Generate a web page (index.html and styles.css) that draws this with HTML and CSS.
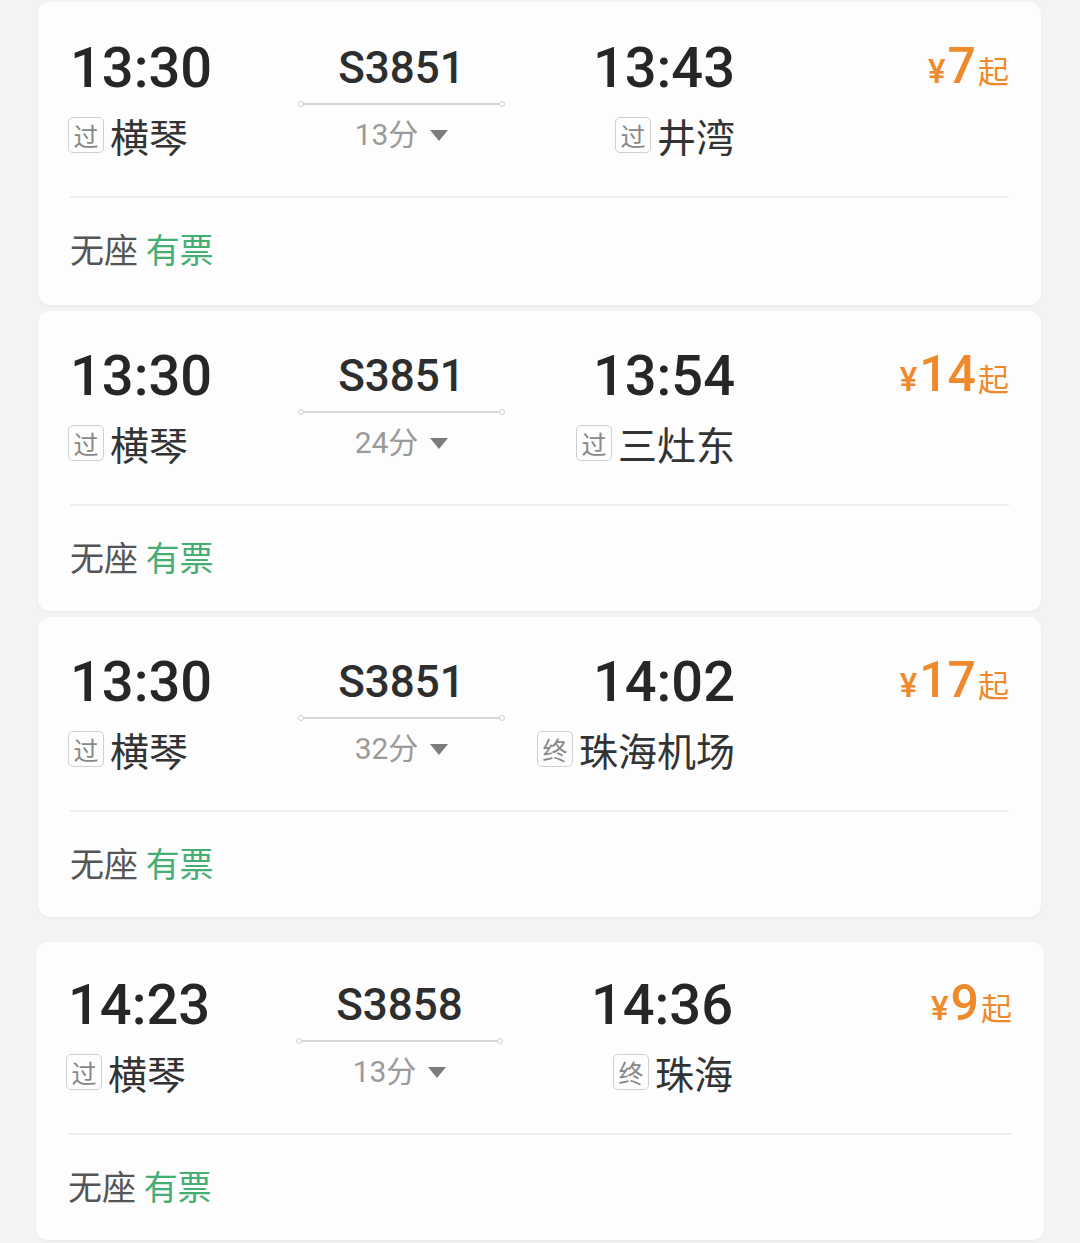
FILE: index.html
```html
<!DOCTYPE html>
<html lang="zh-CN">
<head>
    <meta charset="UTF-8">
    <meta name="viewport" content="width=device-width, initial-scale=1.0">
    <title>车次列表</title>
    <link rel="stylesheet" href="styles.css">
</head>
<body>
    <div class="list">
        <div class="card first">
            <div class="trip">
                <div class="depart">
                    <div class="time">13:30</div>
                    <div class="station"><span class="tag">过</span>横琴</div>
                </div>
                <div class="train">
                    <div class="code">S3851</div>
                    <div class="rail"></div>
                    <div class="dur">13分<span class="caret"></span></div>
                </div>
                <div class="arrive">
                    <div class="time">13:43</div>
                    <div class="station"><span class="tag">过</span>井湾</div>
                </div>
                <div class="price"><span class="yen">¥</span><span class="num">7</span><span class="qi">起</span></div>
            </div>
            <div class="seats">无座 <span class="ok">有票</span></div>
        </div>

        <div class="card">
            <div class="trip">
                <div class="depart">
                    <div class="time">13:30</div>
                    <div class="station"><span class="tag">过</span>横琴</div>
                </div>
                <div class="train">
                    <div class="code">S3851</div>
                    <div class="rail"></div>
                    <div class="dur">24分<span class="caret"></span></div>
                </div>
                <div class="arrive">
                    <div class="time">13:54</div>
                    <div class="station"><span class="tag">过</span>三灶东</div>
                </div>
                <div class="price"><span class="yen">¥</span><span class="num">14</span><span class="qi">起</span></div>
            </div>
            <div class="seats">无座 <span class="ok">有票</span></div>
        </div>

        <div class="card">
            <div class="trip">
                <div class="depart">
                    <div class="time">13:30</div>
                    <div class="station"><span class="tag">过</span>横琴</div>
                </div>
                <div class="train">
                    <div class="code">S3851</div>
                    <div class="rail"></div>
                    <div class="dur">32分<span class="caret"></span></div>
                </div>
                <div class="arrive">
                    <div class="time">14:02</div>
                    <div class="station"><span class="tag">终</span>珠海机场</div>
                </div>
                <div class="price"><span class="yen">¥</span><span class="num">17</span><span class="qi">起</span></div>
            </div>
            <div class="seats">无座 <span class="ok">有票</span></div>
        </div>

        <div class="card later">
            <div class="trip">
                <div class="depart">
                    <div class="time">14:23</div>
                    <div class="station"><span class="tag">过</span>横琴</div>
                </div>
                <div class="train">
                    <div class="code">S3858</div>
                    <div class="rail"></div>
                    <div class="dur">13分<span class="caret"></span></div>
                </div>
                <div class="arrive">
                    <div class="time">14:36</div>
                    <div class="station"><span class="tag">终</span>珠海</div>
                </div>
                <div class="price"><span class="yen">¥</span><span class="num">9</span><span class="qi">起</span></div>
            </div>
            <div class="seats">无座 <span class="ok">有票</span></div>
        </div>
    </div>
</body>
</html>
```

FILE: styles.css
```css
body {
    margin: 0;
    background-color: #f3f3f3;
    font-family: Roboto, "Noto Sans CJK SC", sans-serif;
    color: #2a2a2a;
}
.list {
    padding: 2px 39px 0 38px;
}
.card {
    background: #fdfdfd;
    border-radius: 12px;
    box-shadow: 0 1px 3px rgba(0, 0, 0, 0.05);
    margin-bottom: 6px;
    padding: 33px 32px 0 32px;
    height: 267px;
}
.card.first {
    padding-top: 34px;
    height: 269px;
}
.card.later {
    margin-top: 25px;
    margin-left: -2px;
    margin-right: -3px;
    padding-top: 31px;
}
.trip {
    display: grid;
    grid-template-columns: 230px 203px 232px 1fr;
    padding-bottom: 37px;
    border-bottom: 2px solid #eeeeee;
}
.time {
    font-size: 56px;
    font-weight: 500;
    line-height: 64px;
    color: #262626;
}
.station {
    display: flex;
    align-items: center;
    gap: 6px;
    margin-top: 11px;
    font-family: "Noto Sans CJK SC", sans-serif;
    font-size: 39px;
    line-height: 48px;
    color: #333;
}
.depart .station {
    margin-left: -2px;
}
.tag {
    display: inline-flex;
    align-items: center;
    justify-content: center;
    width: 34px;
    height: 34px;
    border: 1.5px solid #cfcfcf;
    border-radius: 5px;
    font-size: 25px;
    line-height: 1;
    color: #888;
}
.arrive {
    display: flex;
    flex-direction: column;
    align-items: flex-end;
}
.train {
    display: flex;
    flex-direction: column;
    align-items: center;
}
.code {
    font-size: 44px;
    font-weight: 500;
    line-height: 64px;
    color: #2e2e2e;
}
.rail {
    position: relative;
    width: 197px;
    height: 1.5px;
    margin-top: 3px;
    background: #d6d6d6;
}
.rail::before, .rail::after {
    content: "";
    position: absolute;
    top: -2px;
    width: 4px;
    height: 4px;
    border: 1px solid #cfcfcf;
    border-radius: 50%;
    background: #fff;
}
.rail::before { left: -5px; }
.rail::after { right: -5px; }
.dur {
    display: flex;
    align-items: center;
    margin-top: 10px;
    font-size: 30px;
    line-height: 40px;
    color: #9a9a9a;
}
.caret {
    width: 0;
    height: 0;
    margin-left: 12px;
    margin-top: 2px;
    border-left: 9px solid transparent;
    border-right: 9px solid transparent;
    border-top: 11px solid #7c7c7c;
}
.price {
    text-align: right;
    padding-top: 2px;
    line-height: 56px;
    color: #ef8a2c;
}
.yen {
    font-size: 33px;
    font-weight: 500;
}
.num {
    font-size: 50px;
    font-weight: 500;
    margin: 0 2px 0 2px;
}
.qi {
    font-family: "Noto Sans CJK SC", sans-serif;
    font-size: 31px;
}
.seats {
    padding-top: 31px;
    font-family: "Noto Sans CJK SC", sans-serif;
    font-size: 34px;
    line-height: 40px;
    color: #555;
}
.ok {
    color: #45ae72;
}
```
